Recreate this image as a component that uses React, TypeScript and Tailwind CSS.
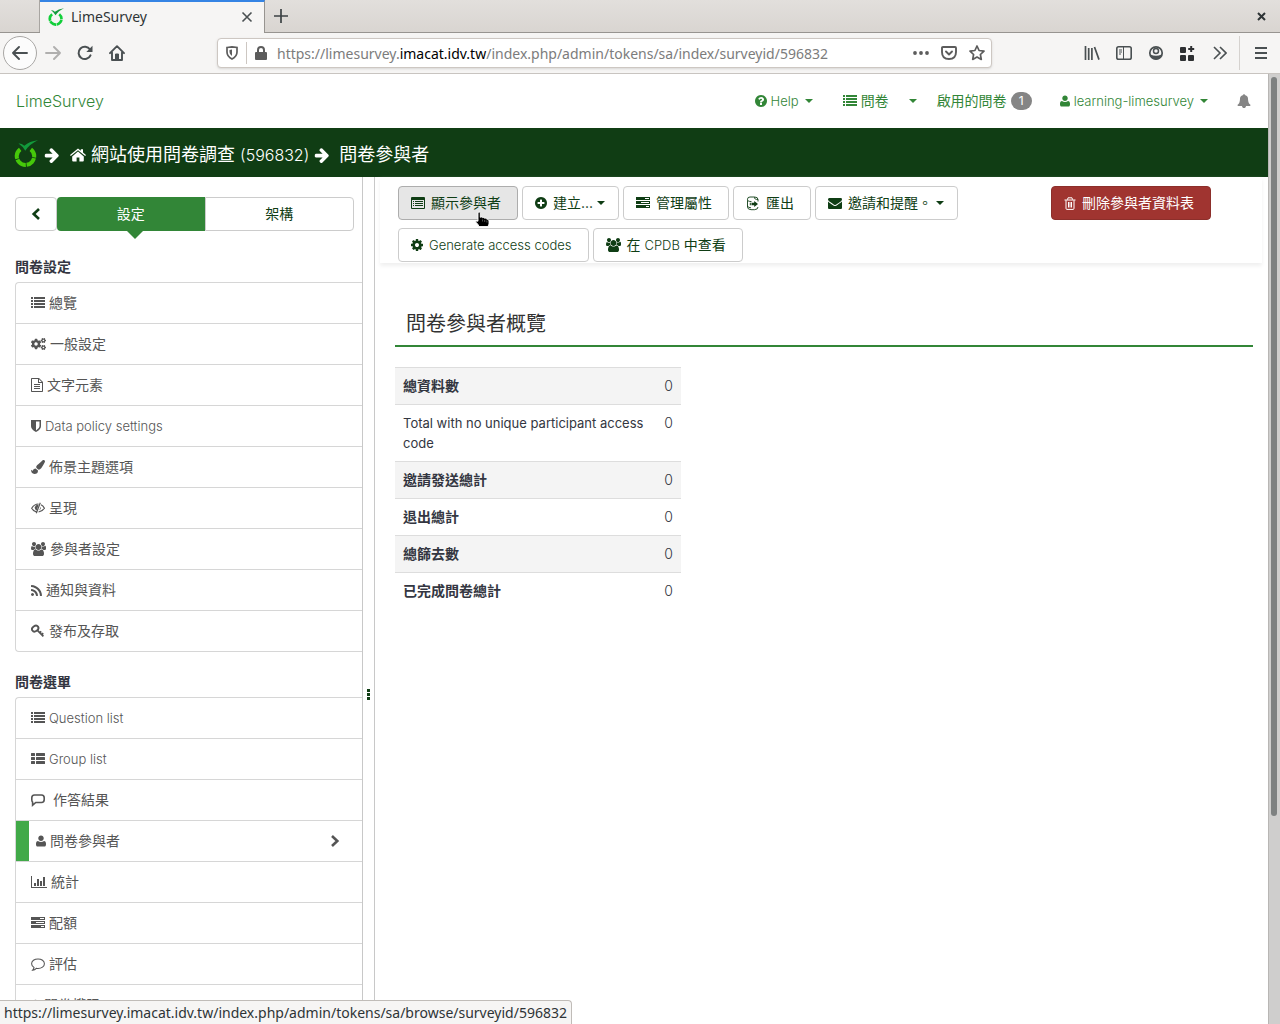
import React from "react";
import { FaCogs, FaPaintBrush, FaLock } from "react-icons/fa";

type IconProps = { className?: string };

const Svg = ({ box, className, children }: { box: string; className?: string; children: React.ReactNode }) => (
  <svg viewBox={box} className={"shrink-0 " + (className ?? "")} fill="currentColor" aria-hidden="true">
    {children}
  </svg>
);

const ListIcon = ({ className = "w-[14px] h-[14px]" }: IconProps) => (
  <Svg box="0 0 14 14" className={className}>
    <path d="M0 1h2v2H0zM0 4h2v2H0zM0 7h2v2H0zM0 10h2v2H0zM3 1h11v2H3zM3 4h11v2H3zM3 7h11v2H3zM3 10h11v2H3z" />
  </Svg>
);
const ThListIcon = ({ className = "w-[14px] h-[14px]" }: IconProps) => (
  <Svg box="0 0 14 14" className={className}>
    <path d="M.6 1h2.8q.6 0 .6.6v1.8q0 .6-.6.6H.6Q0 4 0 3.400V1.600Q0 1 .6 1zM.6 5h2.800q.6 0 .6.6v1.800q0 .6-.6.6H.6Q0 8 0 7.400V5.600Q0 5 .6 5zM.6 9h2.800q.6 0 .6.6v1.800q0 .6-.6.6H.6Q0 12 0 11.400V9.600Q0 9 .6 9zM5.600 1h7.800q.6 0 .6.6v1.800q0 .6-.6.6H5.600Q5 4 5 3.400V1.600Q5 1 5.600 1zM5.600 5h7.800q.6 0 .6.6v1.800q0 .6-.6.6H5.600Q5 8 5 7.400V5.600Q5 5 5.600 5zM5.600 9h7.800q.6 0 .6.6v1.800q0 .6-.6.6H5.600Q5 12 5 11.400V9.600Q5 9 5.600 9z" />
  </Svg>
);
const ServerIcon = ({ className = "w-[14px] h-[14px]" }: IconProps) => (
  <Svg box="0 0 14 14" className={className}>
    <path fillRule="evenodd" d="M0 1h14v3H0zM9 2v1h4V2zM0 5h14v3H0zM5 6v1h8V6zM0 9h14v3H0zM10 10v1h3v-1z" />
  </Svg>
);
const ListAltIcon = ({ className = "w-[14px] h-[14px]" }: IconProps) => (
  <Svg box="0 0 14 14" className={className}>
    <path fillRule="evenodd" d="M1 1h12q1 0 1 1v10q0 1-1 1H1q-1 0-1-1V2q0-1 1-1zM1 4v8h12V4zM2 5h1v1H2zM4 5h8v1H4zM2 7h1v1H2zM4 7h8v1H4zM2 9h1v1H2zM4 9h8v1H4z" />
  </Svg>
);
const FileIcon = () => (
  <Svg box="0 0 12 14" className="w-3 h-[14px]">
    <path fillRule="evenodd" d="M.8 0H8l4 4v9.200q0 .8-.8.8H.8q-.8 0-.8-.8V.8Q0 0 .8 0zM1 1v12h10V5H7V1zM8 1.300V4h2.700zM3 6h6v1H3zM3 8h6v1H3zM3 10h6v1H3z" />
  </Svg>
);
const ShieldIcon = () => (
  <Svg box="0 0 10 12" className="w-[10px] h-3">
    <path fillRule="evenodd" d="M0 0h10v6.200Q10 9.500 5 12 0 9.500 0 6.200zM5 1.500v8.900q3.500-2 3.500-4.200V1.500z" />
  </Svg>
);
const EyeClosedIcon = () => (
  <Svg box="0 0 14 12" className="w-[14px] h-3">
    <path d="M9.300.8 5.300 11.200M5.300 9.900Q2.300 9.200.7 6.200 3.200 2.200 7.500 2M10 2.700Q12.300 3.900 13.400 6.200 11.500 9.300 7.600 10" fill="none" stroke="currentColor" strokeWidth="1.200" />
    <path d="M7.700 2.600 5.700 8.600Q3.500 7.500 3.700 5.200 4.400 2.800 7.700 2.600zM9.700 4.700q.8 2-1.500 3.700z" />
  </Svg>
);
const UsersIcon = () => (
  <Svg box="0 0 1920 1792" className="w-[15px] h-[14px]">
    <path d="M593 896q-162 5-265 128h-134q-82 0-138-40.500t-56-118.500q0-353 124-353 6 0 43.500 21t97.500 42.500 119 21.500q67 0 133-23-5 37-5 66 0 159 93 286zm1071 637q0 120-73 189.500t-194 69.500h-874q-121 0-194-69.500t-73-189.500q0-53 3.500-103.500t14-109 26.500-108.500 43-97.500 62-81 85.500-53.500 111.500-20q10 0 43 21.500t73 48 107 48 135 21.500 135-21.500 107-48 73-48 43-21.500q61 0 111.500 20t85.500 53.500 62 81 43 97.500 26.500 108.500 14 109 3.500 103.500zm-1024-1277q0 106-75 181t-181 75-181-75-75-181 75-181 181-75 181 75 75 181zm704 384q0 159-112.500 271.500t-271.500 112.500-271.500-112.500-112.500-271.500 112.500-271.500 271.500-112.500 271.500 112.500 112.500 271.500zm576 225q0 78-56 118.500t-138 40.500h-134q-103-123-265-128 93-127 93-286 0-29-5-66 66 23 133 23 59 0 119-21.500t97.500-42.500 43.500-21q124 0 124 353zm-128-609q0 106-75 181t-181 75-181-75-75-181 75-181 181-75 181 75 75 181z" />
  </Svg>
);
const RssIcon = () => (
  <Svg box="192 128 1408 1408" className="w-[11px] h-[11px]">
    <path d="M576 1344q0 80-56 136t-136 56-136-56-56-136 56-136 136-56 136 56 56 136zm512 123q2 28-17 48-18 21-47 21h-135q-25 0-43-16.500t-20-41.500q-22-229-184.500-391.500t-391.500-184.500q-25-2-41.500-20t-16.500-43v-135q0-29 21-47 17-17 43-17h5q160 13 306 80.500t259 181.500q114 113 181.500 259t80.500 306zm512 2q2 27-18 47-18 20-46 20h-143q-26 0-44.500-17.500t-19.500-42.500q-12-215-101-408.500t-231.500-336-336-231.500-408.500-102q-25-1-42.500-19.500t-17.500-43.500v-143q0-28 20-46 18-18 44-18h3q262 13 501.500 120t425.500 294q187 186 294 425.500t120 501.500z" />
  </Svg>
);
const KeyIcon = () => (
  <Svg box="0 0 14 14" className="w-[14px] h-[14px]">
    <g fill="none" stroke="currentColor">
      <ellipse cx="4.200" cy="4.600" rx="3.400" ry="2.600" transform="rotate(-35 4.200 4.600)" strokeWidth="1.900" />
      <path d="M6.200 6.200 12.400 12.400M12.200 9.200 10.300 11.100M10.200 7.300 8.400 9.100" strokeWidth="1.800" />
    </g>
  </Svg>
);
const CommentSquareIcon = () => (
  <Svg box="0 0 14 13" className="w-[14px] h-[13px]">
    <path d="M3.500 1h7Q13.200 1 13.200 3.800v1.700q0 3-2.700 3H4.800L1.600 11.200V8.200Q.8 7.500.8 5.700V3.800Q.8 1 3.500 1z" fill="none" stroke="currentColor" strokeWidth="1.600" />
  </Svg>
);
const CommentIcon = () => (
  <Svg box="0 0 14 13" className="w-[14px] h-[13px]">
    <path d="M7 .9c3.500 0 6.400 2 6.400 4.800S10.500 10.500 7 10.500q-.9 0-1.700-.2Q3.700 12 1.700 12.200 2.900 11 3 9.400.6 8 .6 5.700C.6 2.900 3.500.9 7 .9z" fill="none" stroke="currentColor" strokeWidth="1.050" />
  </Svg>
);
const ChartIcon = () => (
  <Svg box="0 0 16 14" className="w-4 h-[14px]">
    <path d="M0 1h1v11h15v1H0zM3 8h2v3H3zM6 4h2v7H6zM9 6h2v5H9zM12 2h2v9h-2z" />
  </Svg>
);
const UserIcon = ({ className = "w-[14px] h-[14px]" }: IconProps) => (
  <Svg box="196 128 1400 1536" className={className}>
    <path d="M1596 1399q0 109-62.500 187t-150.500 78H409q-88 0-150.500-78T196 1399q0-150 15-250 35-230 260-250 190 128 425 128t425-128q225 20 260 250 15 100 15 250zm-316-887q0 159-112.500 271.500t-271.500 112.500-271.500-112.500-112.500-271.500 112.500-271.500 271.500-112.500 271.500 112.500 112.500 271.500z" />
  </Svg>
);
const CogIcon = () => (
  <Svg box="128 128 1536 1536" className="w-3 h-3">
    <path d="M1152 896q0-106-75-181t-181-75-181 75-75 181 75 181 181 75 181-75 75-181zm512-109v222q0 12-8 23t-20 13l-185 28q-19 54-39 91 35 50 107 138 10 12 10 25t-9 23q-27 37-99 108t-94 71q-12 0-26-9l-138-108q-44 23-91 38-16 136-29 186-7 28-36 28h-222q-14 0-24.500-8.500t-11.500-21.500l-28-184q-49-16-90-37l-141 107q-10 9-25 9-14 0-25-11-126-114-165-168-7-10-7-23 0-12 8-23 15-21 51-66.500t54-70.500q-27-50-41-99l-183-27q-13-2-21-12.500t-8-23.500v-222q0-12 8-23t19-13l186-28q14-46 39-92-40-57-107-138-10-12-10-24 0-10 9-23 26-36 98.500-107.500t94.500-71.500q13 0 26 10l138 107q44-23 91-38 16-136 29-186 7-28 36-28h222q14 0 24.500 8.500t11.500 21.500l28 184q49 16 90 37l142-107q9-9 24-9 13 0 25 10 129 119 165 170 7 8 7 22 0 12-8 23-15 21-51 66.500t-54 70.500q26 50 41 98l183 28q13 2 21 12.500t8 23.500z" />
  </Svg>
);
const PlusCircleIcon = () => (
  <Svg box="128 128 1536 1536" className="w-3 h-3">
    <path d="M1344 960v-128q0-26-19-45t-45-19h-256v-256q0-26-19-45t-45-19h-128q-26 0-45 19t-19 45v256h-256q-26 0-45 19t-19 45v128q0 26 19 45t45 19h256v256q0 26 19 45t45 19h128q26 0 45-19t19-45v-256h256q26 0 45-19t19-45zm320-64q0 209-103 385.500t-279.500 279.500-385.500 103-385.500-103-279.500-279.500-103-385.500 103-385.500 279.500-279.500 385.500-103 385.500 103 279.500 279.500 103 385.500z" />
  </Svg>
);
const HelpIcon = () => (
  <Svg box="128 128 1536 1536" className="w-3 h-3">
    <path d="M1024 1376v-192q0-14-9-23t-23-9h-192q-14 0-23 9t-9 23v192q0 14 9 23t23 9h192q14 0 23-9t9-23zm256-672q0-88-55.500-163t-138.500-116-170-41q-243 0-371 213-15 24 8 42l132 100q7 6 19 6 16 0 25-12 53-68 86-92 34-24 86-24 48 0 85.500 26t37.500 59q0 38-20 61t-68 45q-63 28-115.500 86.500t-52.500 125.500v36q0 14 9 23t23 9h192q14 0 23-9t9-23q0-19 21.500-49.500t54.500-49.500q32-18 49-28.500t46-35 44.500-48 28-60.500 12.500-81zm384 192q0 209-103 385.500t-279.500 279.500-385.500 103-385.500-103-279.500-279.500-103-385.500 103-385.500 279.500-279.500 385.500-103 385.500 103 279.500 279.500 103 385.500z" />
  </Svg>
);
const EnvelopeIcon = () => (
  <Svg box="0 256 1792 1408" className="w-[14px] h-[11px]">
    <path d="M1792 710v794q0 66-47 113t-113 47h-1472q-66 0-113-47t-47-113v-794q44 49 101 87 362 246 497 345 57 42 92.500 65.500t94.500 48 110 24.500h2q51 0 110-24.500t94.500-48 92.500-65.500q170-123 498-345 57-39 100-87zm0-294q0 79-49 151t-122 123q-376 261-468 325-10 7-42.500 31t-54 38.500-52 32.500-57.500 27-50 9h-2q-23 0-50-9t-57.500-27-52-32.500-54-38.500-42.500-31q-91-64-262-182.500t-205-142.500q-62-42-117-115.500t-55-136.500q0-78 41.500-130t118.500-52h1472q65 0 112.500 47t47.500 113z" />
  </Svg>
);
const ArrowRightIcon = () => (
  <Svg box="64 160 1540 1580" className="w-[15px] h-[15px]">
    <path d="M1600 960q0 54-37 91l-651 651q-39 37-91 37-51 0-90-37l-75-75q-38-38-38-91t38-91l293-293h-704q-52 0-84.500-37.500t-32.500-90.500v-128q0-53 32.500-90.500t84.500-37.500h704l-293-294q-38-36-38-90t38-90l75-75q38-38 90-38 53 0 91 38l651 651q37 35 37 90z" />
  </Svg>
);
const BellIcon = () => (
  <Svg box="64 0 1664 1792" className="w-[14px] h-[14px]">
    <path d="M1728 1408q0 52-38 90t-90 38h-448q0 106-75 181t-181 75-181-75-75-181h-448q-52 0-90-38t-38-90q50-42 91-88t85-119.500 74.500-158.500 50-206 19.500-260q0-152 117-282.500t307-158.500q-8-19-8-39 0-40 28-68t68-28 68 28 28 68q0 20-8 39 190 28 307 158.500t117 282.500q0 139 19.500 260t50 206 74.500 158.500 85 119.500 91 88z" />
  </Svg>
);
const HomeSolidIcon = () => (
  <Svg box="0 0 16 14" className="w-4 h-[14px]">
    <path d="M8 3.600 13.800 8.400V12.600q0 .9-.9.9H9.400V9.500H6.600v4H3.100q-.9 0-.9-.9V8.400zM8 .5 10.800 2.800V1.300h2.200v3.300L16 7.100l-.8 1L8 2.200.8 8.100 0 7.100z" />
  </Svg>
);
const ExportIcon = () => (
  <Svg box="0 0 14 15" className="w-[14px] h-[15px]">
    <path d="M1.500 4.500V3.200Q1.500 1 4 1h4.500Q12 1 12 3.500M12 11q0 2.500-3.500 2.700H5Q1.500 13.500 1.500 11V4.500Q3 5.600 5.500 5.600M1.500 10q1 1.800 3.500 1.800M8.500 1.200q-.5 2.300 3.500 2.300v2" fill="none" stroke="currentColor" strokeWidth=".9" />
    <path d="M3.800 6.700h1v2.600h-1zM5.500 6.700h2.700V4.900L12 8 8.200 11.100V9.300H5.500z" />
  </Svg>
);
const TrashIcon = () => (
  <Svg box="0 0 12 13" className="w-3 h-[13px]">
    <path d="M.5 3h11M3.500 2.700 4 .8h4l.5 1.900M2 3.200v8.200q0 1 1 1h6q1 0 1-1V3.200M4.500 5v5.500M6 5v5.500M7.500 5v5.500" fill="none" stroke="currentColor" strokeWidth="1" />
  </Svg>
);
const Chevron = ({ className }: IconProps) => (
  <Svg box="0 0 10 12" className={"w-[10px] h-3 " + (className ?? "")}>
    <path d="M2 1 7.300 6 2 11" fill="none" stroke="currentColor" strokeWidth="2.600" />
  </Svg>
);
const Caret = ({ className }: IconProps) => (
  <Svg box="0 0 8 4" className={"w-2 h-1 " + (className ?? "")}>
    <path d="M0 0h8L4 4z" />
  </Svg>
);
const LimeLogo = ({ className, ring = "#46c80a" }: IconProps & { ring?: string }) => (
  <Svg box="0 0 24 27" className={className}>
    <path d="M6.200 9.300A8.700 8.700 0 1 0 16.800 9.300" fill="none" stroke={ring} strokeWidth="4" strokeDasharray="10.500 .8" />
    <path d="M4.500 3.500Q7.500 3.200 10.300 5.700 15.500 1 24 .2 15.500 4 11.300 10.700 9 6.500 4.500 3.500z" fill="#129a3c" />
  </Svg>
);

type NavItem = { icon: React.ReactNode; label: string; gap?: string; active?: boolean };

const latin = /^[\x20-\x7e]+$/;
const Label = ({ text, className = "" }: { text: string; className?: string }) => (
  <span className={(latin.test(text) ? "text-[13px] font-light " : "") + className}>{text}</span>
);

const settings: NavItem[] = [
  { icon: <ListIcon />, label: "總覽" },
  { icon: <FaCogs className="w-[15px] h-[14px]" />, label: "一般設定" },
  { icon: <FileIcon />, label: "文字元素" },
  { icon: <ShieldIcon />, label: "Data policy settings" },
  { icon: <FaPaintBrush className="w-[14px] h-[14px]" />, label: "佈景主題選項" },
  { icon: <EyeClosedIcon />, label: "呈現" },
  { icon: <UsersIcon />, label: "參與者設定" },
  { icon: <RssIcon />, label: "通知與資料" },
  { icon: <KeyIcon />, label: "發布及存取" },
];
const menu: NavItem[] = [
  { icon: <ListIcon />, label: "Question list" },
  { icon: <ThListIcon />, label: "Group list" },
  { icon: <CommentSquareIcon />, label: "作答結果", gap: "ml-1" },
  { icon: <UserIcon className="w-[10px] h-3" />, label: "問卷參與者", active: true },
  { icon: <ChartIcon />, label: "統計" },
  { icon: <ServerIcon />, label: "配額" },
  { icon: <CommentIcon />, label: "評估" },
  { icon: <FaLock className="w-[9px] h-3" />, label: "問卷權限" },
];
const summary: [string, number][] = [
  ["總資料數", 0],
  ["Total with no unique participant access code", 0],
  ["邀請發送總計", 0],
  ["退出總計", 0],
  ["總篩去數", 0],
  ["已完成問卷總計", 0],
];

const MenuSection = ({ title, items }: { title: string; items: NavItem[] }) => (
  <section className="mb-5">
    <h2 className="h-[25px] pl-[15px] text-sm leading-5 font-bold text-[#333641]">{title}</h2>
    <ul className="ml-[15px] rounded-l-[4px] border border-r-0 border-[#d6d6d6] divide-y divide-[#d6d6d6]">
      {items.map((it) => (
        <li key={it.label}>
          <a
            href="#"
            className={
              "flex h-10 items-center gap-1 text-sm text-[#555] " +
              (it.active ? "border-l-[13px] border-[#41a948] pl-[7px] pr-[22px]" : "px-[15px]")
            }
          >
            {it.icon}
            <Label text={it.label} className={it.gap} />
            {it.active && <Chevron className="ml-auto" />}
          </a>
        </li>
      ))}
    </ul>
  </section>
);

const ToolButton = ({ icon, label, caret, hover }: { icon: React.ReactNode; label: React.ReactNode; caret?: boolean; hover?: boolean }) => (
  <button
    type="button"
    className={
      "relative flex h-[34px] items-center rounded-[4px] border pl-3 text-sm text-[#0f3d14] " +
      (caret ? "pr-[13px] " : "pr-4 ") +
      (hover ? "border-[#adadad] bg-[#e6e6e6]" : "border-[#ccc] bg-white")
    }
  >
    {icon}
    <span className="ml-[6px]">{typeof label === "string" ? <Label text={label} /> : label}</span>
    {caret && <Caret className="ml-1" />}
    {hover && (
      <svg viewBox="0 0 15 16" className="absolute left-[76px] top-[24px] w-[15px] h-4" aria-hidden="true">
        <path d="M3 1.500Q4.200.3 5.300 1.700v4.600q1.300-.9 2.200.3 1.400-.5 2.100.6 1.400-.4 2.200.8Q14 8.200 14 10v3l-1 2.500H4Q3.600 13.500.7 11 .6 9.300 3 10.200z" fill="#000" stroke="#fff" strokeWidth=".9" />
        <path d="M7.500 8.500v2M9.700 9v2M11.900 9.500v2" stroke="#888" strokeWidth=".6" />
      </svg>
    )}
  </button>
);

const BrowserChrome = () => (
  <header className="shrink-0 font-['Noto_Sans'] text-[#2e3436]">
    <div className="flex h-[33px] border-b border-[#979490] bg-linear-to-b from-[#e2dfdc] to-[#d9d5d1]">
      <div className="w-10 border-r border-[#a8a5a1]" />
      <div className="flex h-[33px] w-[225px] items-center border-r border-t-2 border-r-[#979490] border-t-[#3584e4] bg-[#f6f5f4] pb-[2px] pl-2 pr-[11px]">
        <LimeLogo className="w-4 h-[18px]" ring="#12cf3a" />
        <span className="ml-[7px] text-sm">LimeSurvey</span>
        <button type="button" aria-label="Close tab" className="ml-auto">
          <svg viewBox="0 0 12 12" className="w-3 h-3" fill="none" stroke="#4a5052" strokeWidth="1.600"><path d="m1.500 1.500 9 9m0-9-9 9" /></svg>
        </button>
      </div>
      <button type="button" aria-label="New tab" className="ml-[9px]">
        <svg viewBox="0 0 14 14" className="w-[14px] h-[14px]" fill="none" stroke="#3c4244" strokeWidth="1.700"><path d="M7 0v14M0 7h14" /></svg>
      </button>
      <button type="button" aria-label="Close window" className="ml-auto mr-[14px]">
        <svg viewBox="0 0 9 9" className="w-[9px] h-[9px]" fill="none" stroke="#2e3436" strokeWidth="2"><path d="m1 1 7 7m0-7-7 7" /></svg>
      </button>
    </div>
    <div className="flex h-[41px] items-center border-b border-[#c8c4c0] bg-[#f6f5f4] pl-[3px]">
      <button type="button" aria-label="Back" className="flex h-[34px] w-[34px] items-center justify-center rounded-full border border-[#a9a7a5] bg-[#fcfcfc]">
        <svg viewBox="0 0 16 16" className="w-4 h-4" fill="none" stroke="#4a5052" strokeWidth="1.900" strokeLinecap="round" strokeLinejoin="round"><path d="M7 2 1 8l6 6M1 8h14" /></svg>
      </button>
      <button type="button" aria-label="Forward" className="ml-2">
        <svg viewBox="0 0 16 16" className="w-4 h-4" fill="none" stroke="#b0afae" strokeWidth="1.900" strokeLinecap="round" strokeLinejoin="round"><path d="m9 2 6 6-6 6M15 8H1" /></svg>
      </button>
      <button type="button" aria-label="Reload" className="ml-4">
        <svg viewBox="0 0 16 16" className="w-4 h-4" fill="none" stroke="#4a5052" strokeWidth="2"><path d="M13.500 10.300A6.200 6.200 0 1 1 13 4.500" strokeLinecap="round" /><path d="M15.500.8V7H9.300z" fill="#4a5052" stroke="none" /></svg>
      </button>
      <button type="button" aria-label="Home" className="ml-4">
        <svg viewBox="0 0 16 16" className="w-4 h-4" fill="none" stroke="#4a5052" strokeWidth="1.900" strokeLinejoin="round" strokeLinecap="round"><path d="M1 8.200 8 1.200l7 7M3 7.500V15h10V7.500" /><path d="M6.500 15V9h3v6z" fill="#4a5052" strokeWidth="1" /></svg>
      </button>
      <div className="ml-[92px] flex h-[30px] grow items-center rounded-[4px] border border-[#cdc7c2] bg-white px-2 shadow-sm">
        <svg viewBox="0 0 12 14" className="w-3 h-[14px]" fill="none" stroke="#5c5c5c" strokeWidth="1.700"><path d="M1 1.500 6 .9l5 .6V6q0 4.500-5 7Q1 10.500 1 6z" /><path d="M6 3.500V10Q3.500 8.500 3.500 6V4z" fill="#5c5c5c" stroke="none" /></svg>
        <span className="ml-2 h-[22px] w-px bg-[#cdc7c2]" />
        <svg viewBox="0 0 12 14" className="ml-2 w-3 h-[14px]" fill="#5c5c5c"><path d="M1 6h10q1 0 1 1v6q0 1-1 1H1q-1 0-1-1V7q0-1 1-1z" /><path d="M3 6.500V4q0-3 3-3t3 3v2.500" fill="none" stroke="#5c5c5c" strokeWidth="2" /></svg>
        <p className="ml-[10px] grow whitespace-nowrap pt-px text-sm text-[#7c7c7c]">
          https://limesurvey.<span className="text-black">imacat.idv.tw</span>/index.php/admin/tokens/sa/index/surveyid/596832
        </p>
        <svg viewBox="0 0 16 4" className="w-4 h-1" fill="#5c5c5c"><circle cx="2" cy="2" r="1.900" /><circle cx="8" cy="2" r="1.900" /><circle cx="14" cy="2" r="1.900" /></svg>
        <svg viewBox="0 0 16 14" className="ml-3 w-4 h-[14px]" fill="none" stroke="#5c5c5c" strokeWidth="1.900" strokeLinecap="round" strokeLinejoin="round"><path d="M2 1h12q1 0 1 1v4q0 7-7 7T1 6V2q0-1 1-1z" /><path d="m5 5.500 3 3 3-3" /></svg>
        <svg viewBox="0 0 16 16" className="ml-3 -mr-[2px] w-4 h-4" fill="none" stroke="#5c5c5c" strokeWidth="1.700" strokeLinejoin="round"><path d="m8 1 2.100 4.500 4.900.6-3.600 3.400.9 4.900L8 12l-4.300 2.400.9-4.900L1 6.100l4.900-.6z" /></svg>
      </div>
      <div className="ml-[92px] flex h-[34px] items-center gap-4 text-[#4a5052]">
        <svg viewBox="0 0 16 14" className="w-4 h-[14px]" fill="none" stroke="currentColor" strokeWidth="1.700"><path d="M1.500 0v14M4.700 2v12M7.900 2v12M10.500 1 15 13.600" /></svg>
        <svg viewBox="0 0 16 14" className="w-4 h-[14px]" fill="none" stroke="currentColor" strokeWidth="1.600"><rect x=".8" y=".8" width="14.400" height="12.400" rx="1.800" /><path d="M7.500 1v12M3 4h3M3 6h3M3 8h2" strokeWidth="1" /></svg>
        <svg viewBox="0 0 16 16" className="w-4 h-4" fill="none" stroke="currentColor"><circle cx="8" cy="8" r="6.200" strokeWidth="1.700" /><circle cx="8" cy="6" r="2.500" strokeWidth="1.500" /><path d="M2.500 9.500Q8 12 13.500 9.500 12 14.500 8 14.500T2.500 9.500z" fill="currentColor" stroke="none" /></svg>
        <svg viewBox="0 0 15 15" className="w-[15px] h-[15px]" fill="#2e3032"><rect y="1" width="6" height="6" rx="1" /><rect y="9" width="6" height="6" rx="1" /><rect x="8" y="9" width="6" height="6" rx="1" /><path d="M10.200 0h2v2h2v2h-2v2h-2V4h-2V2h2z" /></svg>
        <svg viewBox="0 0 14 14" className="ml-[2px] w-[14px] h-[14px]" fill="none" stroke="currentColor" strokeWidth="1.600"><path d="m1 1 6 6-6 6M7 1l6 6-6 6" /></svg>
      </div>
      <span className="ml-3 h-[34px] w-px bg-[#d5d2cf]" />
      <button type="button" aria-label="Menu" className="ml-[15px] mr-[13px]">
        <svg viewBox="0 0 12 12" className="w-3 h-3" stroke="#4a5052" strokeWidth="2"><path d="M0 1h12M0 6h12M0 11h12" /></svg>
      </button>
    </div>
  </header>
);

export default function App() {
  return (
    <div className="relative flex h-screen flex-col overflow-hidden bg-white">
      <BrowserChrome />
      <div className="flex min-h-0 grow">
        <div className="flex min-w-0 grow flex-col font-['Inter','Noto_Sans_CJK_TC',sans-serif]">
          <nav className="flex h-[54px] shrink-0 items-center pl-4 pr-[17px] text-sm text-[#328637]">
            <a href="#" className="text-base font-light">LimeSurvey</a>
            <a href="#" className="ml-auto flex items-center gap-1"><HelpIcon /><Label text="Help" /><Caret className="ml-[2px]" /></a>
            <a href="#" className="ml-[30px] flex items-center gap-1"><ListIcon /><span>問卷</span></a>
            <button type="button" aria-label="問卷選項" className="ml-5"><Caret /></button>
            <a href="#" className="ml-5 flex items-center gap-1">
              <span>啟用的問卷</span>
              <span className="flex h-[18px] w-[21px] items-center justify-center rounded-full bg-[#858585] text-xs text-white">1</span>
            </a>
            <a href="#" className="ml-7 flex items-center gap-1"><UserIcon className="w-[10px] h-3" /><Label text="learning-limesurvey" /><Caret className="ml-[2px]" /></a>
            <button type="button" aria-label="Notifications" className="ml-[29px] text-[#858585]"><BellIcon /></button>
          </nav>
          <div className="flex h-[49px] shrink-0 items-center bg-[#103d14] pl-[14px] pt-[5px] text-lg text-white">
            <LimeLogo className="w-6 h-[27px] mb-1" />
            <span className="ml-[6px]"><ArrowRightIcon /></span>
            <a href="#" className="ml-[11px] flex items-center gap-[5px]"><HomeSolidIcon /><span>網站使用問卷調查 <span className="text-base font-light">(596832)</span></span></a>
            <span className="ml-[5px]"><ArrowRightIcon /></span>
            <span className="ml-[10px]">問卷參與者</span>
          </div>
          <div className="flex min-h-0 grow">
            <aside className="w-[363px] shrink-0 overflow-hidden border-r border-[#c8c8c8] pt-5">
              <div className="mb-[26px] ml-[15px] mr-2 flex h-[34px] text-sm">
                <button type="button" aria-label="Collapse" className="flex w-[42px] items-center justify-center rounded-[4px] border border-[#ccc] text-[#0f3d14]"><Chevron className="rotate-180" /></button>
                <button type="button" className="relative flex-1 rounded-l-[4px] bg-[#328637] text-white">
                  設定
                  <Svg box="0 0 16 8" className="absolute left-[70px] top-[34px] w-4 h-2 text-[#328637]"><path d="M0 0h16L8 8z" /></Svg>
                </button>
                <button type="button" className="flex-1 rounded-r-[4px] border border-[#ccc] text-[#0f3d14]">架構</button>
              </div>
              <MenuSection title="問卷設定" items={settings} />
              <MenuSection title="問卷選單" items={menu} />
            </aside>
            <div className="flex w-3 shrink-0 items-center justify-center border-r border-[#c8c8c8] pt-[187px] text-[#0f3d14]">
              <Svg box="0 0 3 11" className="w-[3px] h-[11px]"><path d="M0 0h3v3H0zM0 4h3v3H0zM0 8h3v3H0z" /></Svg>
            </div>
            <main className="min-w-0 grow">
              <div className="ml-[5px] mr-[6px] flex items-start pl-[18px] pr-[51px] pt-[9px] pb-px shadow-[0_3px_4px_#f0f0f0]">
                <div className="flex w-[600px] flex-wrap gap-x-1 gap-y-2">
                  <ToolButton icon={<ListAltIcon />} label="顯示參與者" hover />
                  <ToolButton icon={<PlusCircleIcon />} label={<span>建立...</span>} caret />
                  <ToolButton icon={<ServerIcon />} label="管理屬性" />
                  <ToolButton icon={<ExportIcon />} label="匯出" />
                  <ToolButton icon={<EnvelopeIcon />} label="邀請和提醒。" caret />
                  <ToolButton icon={<CogIcon />} label="Generate access codes" />
                  <ToolButton icon={<UsersIcon />} label={<span>在 <Label text="CPDB" /> 中查看</span>} />
                </div>
                <button type="button" className="ml-auto flex h-[34px] items-center gap-[6px] rounded-[4px] border border-[#8c2f2b] bg-[#a03430] pl-3 pr-4 text-sm text-white">
                  <TrashIcon />
                  <span>刪除參與者資料表</span>
                </button>
              </div>
              <div className="ml-5 mr-[15px] mt-10">
                <h1 className="border-b-2 border-[#328637] px-[11px] pt-1 pb-1 text-xl leading-[34px] text-[#333]">問卷參與者概覽</h1>
                <table className="mt-5 w-[286px] table-fixed border-collapse text-sm leading-5 text-[#333641]">
                  <tbody>
                    {summary.map(([label, n]) => (
                      <tr key={label} className="border-t border-[#ddd] odd:bg-[#f4f4f4]">
                        <th scope="row" className={"py-2 pl-2 text-left align-top " + (latin.test(label) ? "text-[13px] font-normal" : "font-bold")}>{label}</th>
                        <td className="w-6 py-2 pr-2 text-right align-top font-light">{n}</td>
                      </tr>
                    ))}
                  </tbody>
                </table>
              </div>
            </main>
          </div>
        </div>
        <div className="w-3 shrink-0 border-l border-[#b8b6b4] bg-[#cfcecd] pl-[2px] pt-[3px]">
          <div className="h-[78%] w-[6px] rounded-full bg-[#7e8181]" />
        </div>
      </div>
      <div className="absolute bottom-0 left-0 rounded-tr-[4px] border-r border-t border-[#c0bcb8] bg-[#f6f5f4] pl-1 pr-1 font-['Noto_Sans'] text-sm leading-[23px] text-[#2e3436]">
        https://limesurvey.imacat.idv.tw/index.php/admin/tokens/sa/browse/surveyid/596832
      </div>
    </div>
  );
}
